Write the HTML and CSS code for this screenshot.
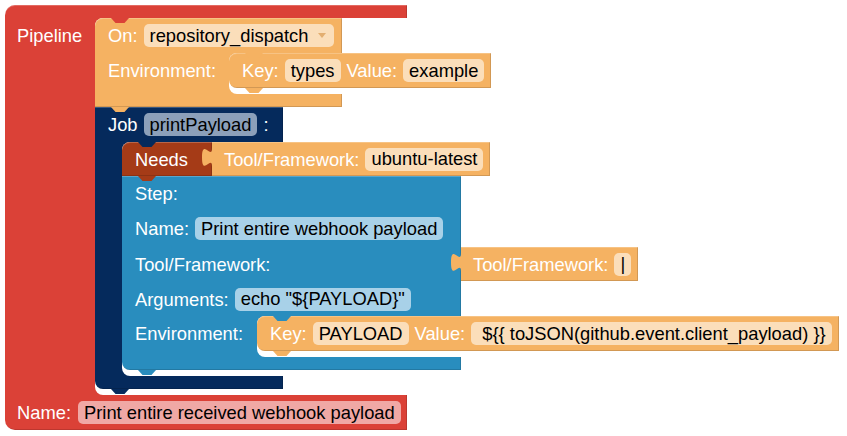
FILE: index.html
```html
<!DOCTYPE html>
<html>
<head>
<meta charset="utf-8">
<title>Pipeline</title>
<link rel="stylesheet" href="styles.css">
</head>
<body>
<div class="ws">
  <div class="blk red pipeline">
    <div class="arm"></div>
    <div class="cin">
      <div class="wall wall-pipe"><div class="row"><span class="lbl">Pipeline</span></div></div>
      <div class="stmt">
        <div class="blk orange on nx">
          <div class="row"><span class="lbl">On:</span><span class="fld dd">repository_dispatch<i class="arrow"></i></span></div>
          <div class="cin">
            <div class="wall wall-on"><div class="row"><span class="lbl">Environment:</span></div></div>
            <div class="stmt">
              <div class="blk orange kv nx">
                <div class="row"><span class="lbl">Key:</span><span class="fld">types</span><span class="lbl">Value:</span><span class="fld">example</span></div>
              </div>
            </div>
          </div>
          <div class="arm"></div>
        </div>
        <div class="blk navy job nx">
          <div class="row"><span class="lbl">Job</span><span class="fld">printPayload</span><span class="lbl">:</span></div>
          <div class="cin">
            <div class="wall wall-job"></div>
            <div class="stmt">
              <div class="pair">
                <div class="blk brown needs nx">
                  <div class="row"><span class="lbl">Needs</span></div>
                </div>
                <div class="blk orange out">
                  <svg class="tab" viewBox="0 0 10 19"><path d="M10 0C10 12.5 0 -10 0 9.4S10 6.25 10 18.75Z"/></svg>
                  <div class="row"><span class="lbl">Tool/Framework:</span><span class="fld">ubuntu-latest</span></div>
                </div>
              </div>
              <div class="blk blue step nx">
                <div class="row"><span class="lbl">Step:</span></div>
                <div class="row"><span class="lbl">Name:</span><span class="fld">Print entire webhook payload</span></div>
                <div class="row row-ext"><span class="lbl">Tool/Framework:</span>
                  <div class="ext">
                    <div class="blk orange out">
                      <svg class="tab" viewBox="0 0 10 19"><path d="M10 0C10 12.5 0 -10 0 9.4S10 6.25 10 18.75Z"/></svg>
                      <div class="row"><span class="lbl">Tool/Framework:</span><span class="fld">|</span></div>
                    </div>
                  </div>
                </div>
                <div class="row row-args"><span class="lbl">Arguments:</span><span class="fld">echo "${PAYLOAD}"</span></div>
                <div class="cin">
                  <div class="wall wall-step"><div class="row"><span class="lbl">Environment:</span></div></div>
                  <div class="stmt">
                    <div class="blk orange kv nx">
                      <div class="row"><span class="lbl">Key:</span><span class="fld">PAYLOAD</span><span class="lbl">Value:</span><span class="fld"> ${{ toJSON(github.event.client_payload) }}</span></div>
                    </div>
                  </div>
                </div>
                <div class="arm"></div>
              </div>
            </div>
          </div>
          <div class="arm"></div>
        </div>
      </div>
    </div>
    <div class="row name-row"><span class="lbl">Name:</span><span class="fld">Print entire received webhook payload</span></div>
  </div>
</div>
</body>
</html>
```
FILE: styles.css
```css
* { box-sizing: border-box; margin: 0; padding: 0; }
html, body { background: #fff; }
body {
  font-family: "Liberation Sans", Arial, sans-serif;
  font-size: 18.33px;
  color: #fff;
  overflow: hidden;
}
.ws { padding: 5px 0 0 5px; }

.blk {
  position: relative;
  display: flex;
  flex-direction: column;
  flex: none;
  background: var(--c);
  box-shadow: inset 0 1px 0 rgba(255, 255, 255, 0.22), inset -1px -1px 0 rgba(0, 0, 0, 0.14);
}
.red { --c: #db4137; --f: #f0a8a5; }
.orange { --c: #f5b262; --f: #fbdeba; }
.navy { --c: #052a5c; --f: #8ca0ba; }
.brown { --c: #a53b17; }
.blue { --c: #298dbe; --f: #a8d1e8; }

.row {
  display: flex;
  align-items: center;
  gap: 6px;
  height: 35px;
  padding: 0 7px 0 13px;
  white-space: pre;
}
.lbl { line-height: 21px; }
.fld {
  display: inline-flex;
  align-items: center;
  height: 23px;
  padding: 0 6px;
  border-radius: 5px;
  background: var(--f);
  color: #000;
}
.dd { padding-right: 8px; }
.arrow {
  display: inline-block;
  width: 0;
  height: 0;
  margin-left: 10px;
  border-left: 4px solid transparent;
  border-right: 4px solid transparent;
  border-top: 5px solid #e3ae70;
}

.arm { height: 13px; }
.cin { display: flex; align-items: stretch; }
.wall { flex: none; }
.stmt {
  position: relative;
  flex: 1;
  min-width: 0;
  display: flex;
  flex-direction: column;
  align-items: flex-start;
  background: #fff;
  border-radius: 8px 0 0 8px;
  padding-bottom: 6px;
}
.stmt::before,
.nx::after {
  content: "";
  position: absolute;
  left: 16px;
  width: 18px;
  height: 5px;
  background: var(--c);
  clip-path: polygon(0 0, 100% 0, 75% 100%, 25% 100%);
  z-index: 3;
}
.stmt::before { top: 0; }
.nx::after { bottom: -5px; }

.pipeline { width: 402px; border-radius: 10px 0 0 10px; }
.wall-pipe { width: 90px; }
.wall-pipe .row { padding-left: 12px; }
.name-row { padding-left: 12px; gap: 7px; }

.on { width: 247px; border-top-left-radius: 8px; }
.wall-on { width: 134px; }
.kv { border-radius: 8px 0 0 8px; }

.job { width: 188px; border-bottom-left-radius: 8px; }
.wall-job { width: 27px; }

.pair { display: flex; align-items: flex-start; }
.needs { width: 90px; border-top-left-radius: 8px; }
.needs .row { height: 34px; }
.out .row { height: 34px; padding-left: 12px; }
.tab {
  position: absolute;
  left: -10px;
  top: 6px;
  width: 10px;
  height: 19px;
  fill: var(--c);
}

.step { width: 339px; border-bottom-left-radius: 8px; }
.row-ext { height: 36px; padding-right: 0; }
.row-args { height: 34px; }
.ext {
  width: 0;
  margin-left: auto;
  align-self: stretch;
  display: flex;
  align-items: center;
}
.wall-step { width: 135px; }
```
